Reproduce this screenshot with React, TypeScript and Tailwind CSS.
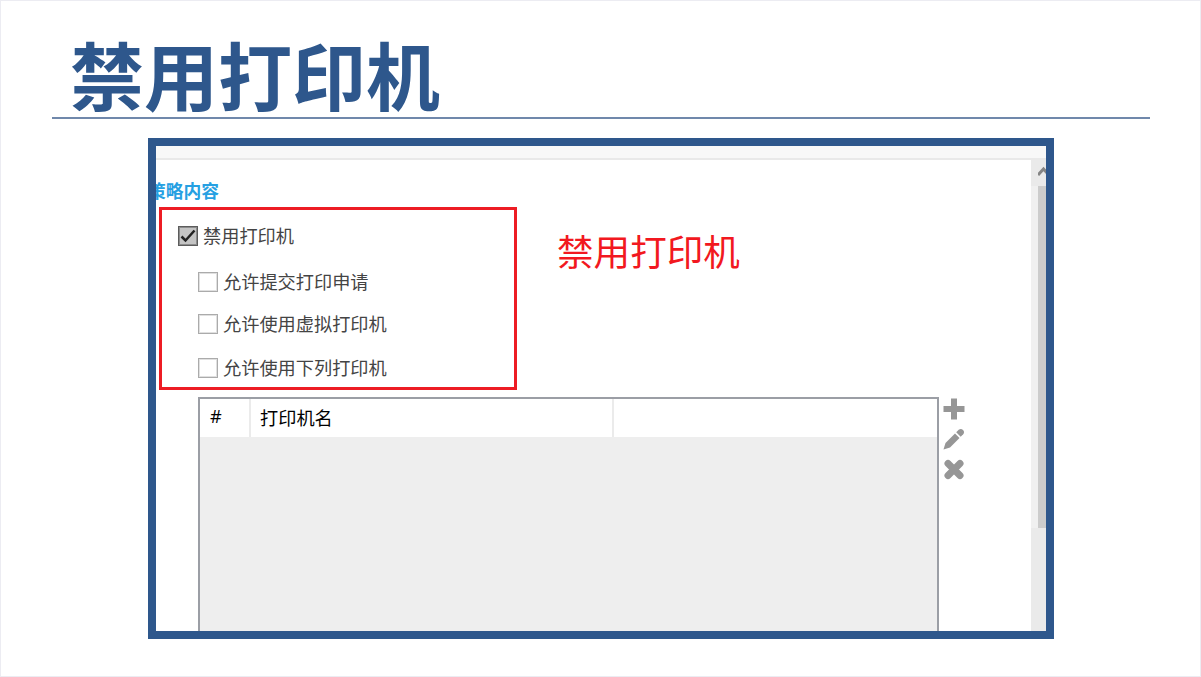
const options = [
  { label: "允许提交打印申请", spacing: "mt-[26px]" },
  { label: "允许使用虚拟打印机", spacing: "mt-[22px]" },
  { label: "允许使用下列打印机", spacing: "mt-[24px]" },
];

const Checkbox = ({ checked = false }: { checked?: boolean }) => (
  <span
    className={`block size-5 shrink-0 border p-px ${
      checked
        ? "border-[#5c5c5c] bg-[#c4c4c4] shadow-[inset_0_0_0_1px_#8c8c8c]"
        : "border-[#ababab] bg-white shadow-[inset_0_0_0_1px_#e0e0e0]"
    }`}
  >
    {checked && (
      <svg viewBox="0 0 16 16" className="size-4" fill="none">
        <path d="M1.5 8.5 5.5 12.5 14.5 2.5" stroke="#222222" strokeWidth="2.5" />
      </svg>
    )}
  </span>
);

const PolicyOptions = () => (
  <div className="ml-[3px] h-[183px] w-[358px] shrink-0 border-3 border-[#ed1c24] pl-4 pt-4 text-[18.2px] text-[#444444]">
    <div className="flex h-5 items-center gap-[5px]">
      <Checkbox checked />
      <span>禁用打印机</span>
    </div>
    {options.map((option) => (
      <div
        key={option.label}
        className={`ml-5 flex h-5 items-center gap-[5px] ${option.spacing}`}
      >
        <Checkbox />
        <span>{option.label}</span>
      </div>
    ))}
  </div>
);

const PrinterTable = () => (
  <div className="flex grow">
    <div className="ml-[42px] flex w-[741px] flex-col border-2 border-b-0 border-[#9b9ea5] bg-[#eeeeee]">
      <div className="flex h-[38px] items-center bg-white text-[18.2px] text-black">
        <div className="flex h-full w-[51px] items-center border-r-2 border-[#ebebeb] pb-0.5 pl-2.5 font-['Open_Sans',sans-serif]">
          #
        </div>
        <div className="flex h-full w-[363px] items-center border-r-2 border-[#ebebeb] pb-px pl-[9px]">
          打印机名
        </div>
      </div>
    </div>
    <div className="ml-1 flex flex-col gap-2 pt-[1px]">
      <svg viewBox="0 0 22 22" className="size-[22px]" fill="#969696">
        <path d="M8 .5h6v7.5h7.5v6H14v7.5H8V14H.5V8H8z" />
      </svg>
      <svg viewBox="0 0 22 22" className="size-[22px]" fill="#969696">
        <path d="M0.5 21.5 2.5 15 12 5.5 16.5 10 7 19.5z" />
        <path d="M13.2 4.3 15.7 1.8Q18 .3 20 2 22 4 20.2 6.3L17.7 8.8z" />
      </svg>
      <svg viewBox="0 0 22 22" className="size-[22px]">
        <path
          d="M5 5.5 17 17.5M17 5.5 5 17.5"
          stroke="#969696"
          strokeWidth="7"
          strokeLinecap="round"
        />
      </svg>
    </div>
  </div>
);

const Scrollbar = () => (
  <div className="flex w-[15px] shrink-0 flex-col items-end bg-[#eaeaea]">
    <div className="flex h-[26px] w-full justify-end overflow-hidden">
      <svg
        viewBox="0 0 8 26"
        className="h-[26px] w-2"
        fill="none"
        stroke="#858585"
        strokeWidth="3"
      >
        <path d="M0 15 5.5 9 11 15" />
      </svg>
    </div>
    <div className="flex h-[342px] w-full justify-end bg-[#f0f0f0]">
      <div className="w-2 bg-[#cccccc]" />
    </div>
  </div>
);

const App = () => {
  return (
    <main className="flex h-[677px] w-[1201px] flex-col overflow-hidden border border-[#ececf2] bg-white font-['Noto_Sans_CJK_SC',sans-serif]">
      <header className="ml-[51px] h-[118px] w-[1098px] shrink-0 border-b-2 border-[#7088ab] pl-[18px]">
        <h1 className="pt-[17px] text-[74px] font-bold leading-[110px] text-[#2e578c]">
          禁用打印机
        </h1>
      </header>

      <section className="ml-[147px] mt-[19px] flex h-[501px] w-[906px] shrink-0 flex-col overflow-hidden border-8 border-[#2e578c]">
        <div className="h-3.5 shrink-0 border-b-2 border-[#e9e9e9] bg-[#f8f8f8]" />
        <div className="flex min-h-0 grow">
          <div className="flex grow flex-col">
            <h2 className="-ml-2 h-[47px] shrink-0 pt-4 text-[17.8px] font-bold leading-7 text-[#26a0e2]">
              策略内容
            </h2>
            <div className="flex h-[190px] shrink-0 items-start">
              <PolicyOptions />
              <p className="ml-10 mt-[18px] text-[36.6px] leading-[52px] text-[#f21820]">
                禁用打印机
              </p>
            </div>
            <PrinterTable />
          </div>
          <Scrollbar />
        </div>
      </section>
    </main>
  );
};

export default App;
